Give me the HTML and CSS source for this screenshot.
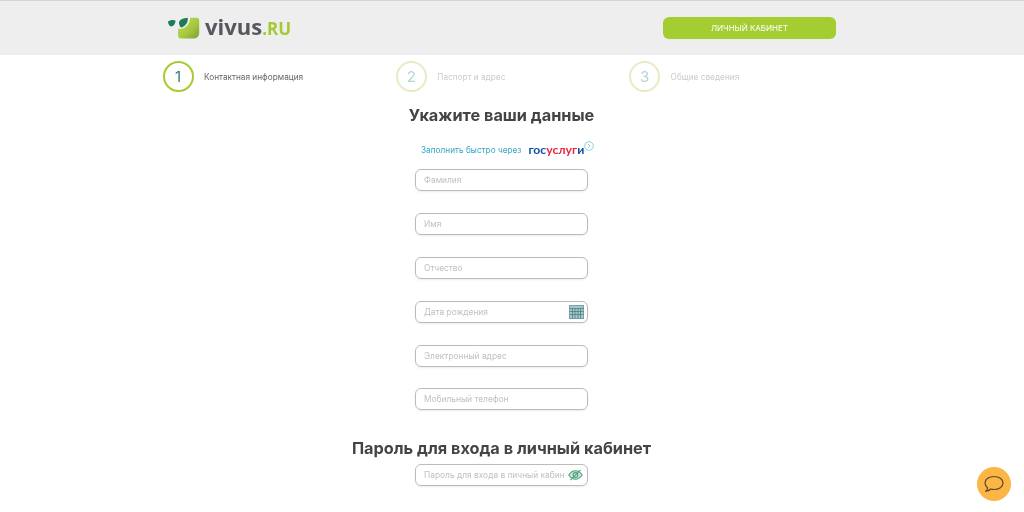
FILE: index.html
```html
<!DOCTYPE html>
<html lang="ru">
<head>
<meta charset="utf-8">
<title>Vivus</title>
<link rel="stylesheet" href="styles.css">
</head>
<body>
<header class="header">
  <div class="logo">
    <svg class="logo-mark" width="32" height="22" viewBox="0 0 32 22">
      <defs><linearGradient id="lg" x1="0" y1="0" x2="1" y2="1"><stop offset="0" stop-color="#c6e05a"/><stop offset="0.600" stop-color="#a4c63c"/><stop offset="1" stop-color="#7f9c38"/></linearGradient></defs>
      <path d="M0 4.500C2 2.800 5 2.500 7.500 3.500C7.500 6.500 5.500 9.500 2.800 9.500C1 8.800 0.300 6.800 0 4.500Z" fill="#1f7a58"/>
      <path d="M11 5C12 2.500 15 1 19.800 0.800C20 5 18 9.500 13 10.500C11.500 9.500 11 7.500 11 5Z" fill="#1f7a58"/>
      <path d="M22 0.800H29C30.500 0.800 31.200 1.800 31.200 3.300V16C31.200 19.500 28.500 21.500 25 21.500H13C11 21.500 10 20 10 18V11.500C11 12 12 12 13.500 11.800C18.500 11 22 7 22 0.800Z" fill="url(#lg)"/>
    </svg>
    <span class="logo-text">vivus<span class="logo-ru">.RU</span></span>
  </div>
  <a class="cabinet">ЛИЧНЫЙ КАБИНЕТ</a>
</header>
<nav class="steps">
  <div class="step step-active"><span class="step-num">1</span><span class="step-label">Контактная информация</span></div>
  <div class="step"><span class="step-num">2</span><span class="step-label">Паспорт и адрес</span></div>
  <div class="step"><span class="step-num">3</span><span class="step-label">Общие сведения</span></div>
</nav>
<main class="form">
  <h1 class="title">Укажите ваши данные</h1>
  <div class="gos">
    <span class="gos-link">Заполнить быстро через</span>
    <span class="gos-logo"><span class="gos-blue">гос</span><span class="gos-red">услуг</span><span class="gos-blue">и</span></span>
    <svg class="gos-help" width="10" height="10" viewBox="0 0 10 10">
      <circle cx="5" cy="5" r="4.300" fill="none" stroke="#7cc0d8" stroke-width="0.800"/>
      <path d="M4 3L6 5L4 7" fill="none" stroke="#7cc0d8" stroke-width="0.800"/>
    </svg>
  </div>
  <div class="fields">
    <div class="field">Фамилия</div>
    <div class="field">Имя</div>
    <div class="field">Отчество</div>
    <div class="field">Дата рождения
      <svg class="field-icon field-icon-cal" width="15" height="14" viewBox="0 0 15 14">
        <rect x="0.500" y="0.500" width="14" height="13" fill="#a4c8c8" stroke="#7aa4a8"/>
        <path d="M0.500 3.500H14.500M3.500 3.500V13.500M6 3.500V13.500M9 3.500V13.500M11.500 3.500V13.500M0.500 6.500H14.500M0.500 9.500H14.500" stroke="#4f7f88" stroke-width="0.800" fill="none"/>
      </svg>
    </div>
    <div class="field">Электронный адрес</div>
    <div class="field">Мобильный телефон</div>
  </div>
  <h2 class="title title-second">Пароль для входа в личный кабинет</h2>
  <div class="field">Пароль для входа в личный кабин
    <svg class="field-icon" width="15" height="12" viewBox="0 0 15 12">
      <path d="M0.800 6C3 2.800 5 1.800 7.500 1.800S12 2.800 14.200 6C12 9.200 10 10.200 7.500 10.200S3 9.200 0.800 6Z" fill="#cfe8dc" stroke="#4fa07c" stroke-width="1.100"/>
      <circle cx="7.500" cy="6" r="2.400" fill="none" stroke="#4fa07c" stroke-width="1.100"/>
      <path d="M12.500 0.800L2.500 11.200" stroke="#4fa07c" stroke-width="1.100"/>
    </svg>
  </div>
</main>
<button class="chat" aria-label="Чат">
  <svg width="22" height="20" viewBox="0 0 22 20">
    <path d="M11 2.500C16 2.500 20 5.200 20 9S16 15.500 11 15.500C9.800 15.500 8.700 15.300 7.700 15C6.500 16.300 5 17 3 17.200C4 16 4.500 15 4.500 13.700C2.900 12.500 2 10.900 2 9C2 5.200 6 2.500 11 2.500Z" fill="none" stroke="#5a4a2a" stroke-width="1.200"/>
  </svg>
</button>
</body>
</html>
```
FILE: styles.css
```css
* { box-sizing: border-box; }
html, body { margin: 0; height: 512px; overflow: hidden; }
body { background: #fff; font-family: "Inter", "Liberation Sans", sans-serif; color: #444; position: relative; filter: blur(0.35px); }
.header { height: 55px; background: #eeeeee; border-top: 1px solid #d4d4d4; padding: 0 188px 0 168px; display: flex; align-items: center; justify-content: space-between; }
.logo { display: flex; align-items: center; gap: 5px; margin-top: -1px; }
.logo-mark { display: block; }
.logo-text { font: 700 22px/24px "Open Sans", "DejaVu Sans", sans-serif; color: #55585c; }
.logo-ru { color: #a4c935; font-size: 17px; font-weight: 700; }
.cabinet { width: 173px; height: 22px; margin-top: -1px; background: #a4cd32; color: #fff; border-radius: 6px; font-size: 8px; display: flex; align-items: center; justify-content: center; }
.steps { display: flex; padding: 6px 0 0 162.500px; }
.step { width: 233.300px; display: flex; align-items: center; gap: 10.500px; }
.step-num { width: 31px; height: 31px; border-radius: 50%; border: 2px solid #e6edc4; color: #b4d6d2; font-size: 15px; display: flex; align-items: center; justify-content: center; }
.step-label { font-size: 8.250px; color: #cccccc; }
.step-active .step-num { border-color: #a4cd32; color: #2f7d6e; }
.step-active .step-label { color: #666; }
.form { display: flex; flex-direction: column; align-items: center; padding-right: 21px; }
.title { margin: 13px 0 0; font-size: 16.300px; line-height: 20px; font-weight: 700; color: #444; white-space: nowrap; }
.gos { display: flex; align-items: center; width: 173px; margin-top: 15px; height: 18px; padding-left: 6px; white-space: nowrap; }
.gos-link { font-size: 8.250px; color: #35a5c8; flex: none; margin-top: 2px; }
.gos-logo { margin-left: 7px; font: 700 12.200px "Lato", sans-serif; flex: none; }
.gos-blue { color: #0d4f9e; }
.gos-red { color: #e8263f; }
.gos-help { flex: none; margin-top: -6px; }
.fields { display: flex; flex-direction: column; gap: 21.900px; margin-top: 11px; }
.field { width: 173px; height: 22px; border: 1.500px solid #bbbbbb; border-radius: 6px; font-size: 8.400px; color: #c0c0c0; padding: 0 8px; display: flex; align-items: center; justify-content: space-between; white-space: nowrap; overflow: hidden; box-shadow: 0 1px 2px rgba(0,0,0,.08); }
.field-icon { flex: none; margin-right: -4px; }
.field-icon-cal { margin-right: -5px; }
.title-second { margin: 28px 0 6px; }
.chat { position: absolute; right: 13px; bottom: 11px; width: 34px; height: 34px; border: 0; border-radius: 50%; padding: 0; background: #fbb645; display: flex; align-items: center; justify-content: center; }
```
